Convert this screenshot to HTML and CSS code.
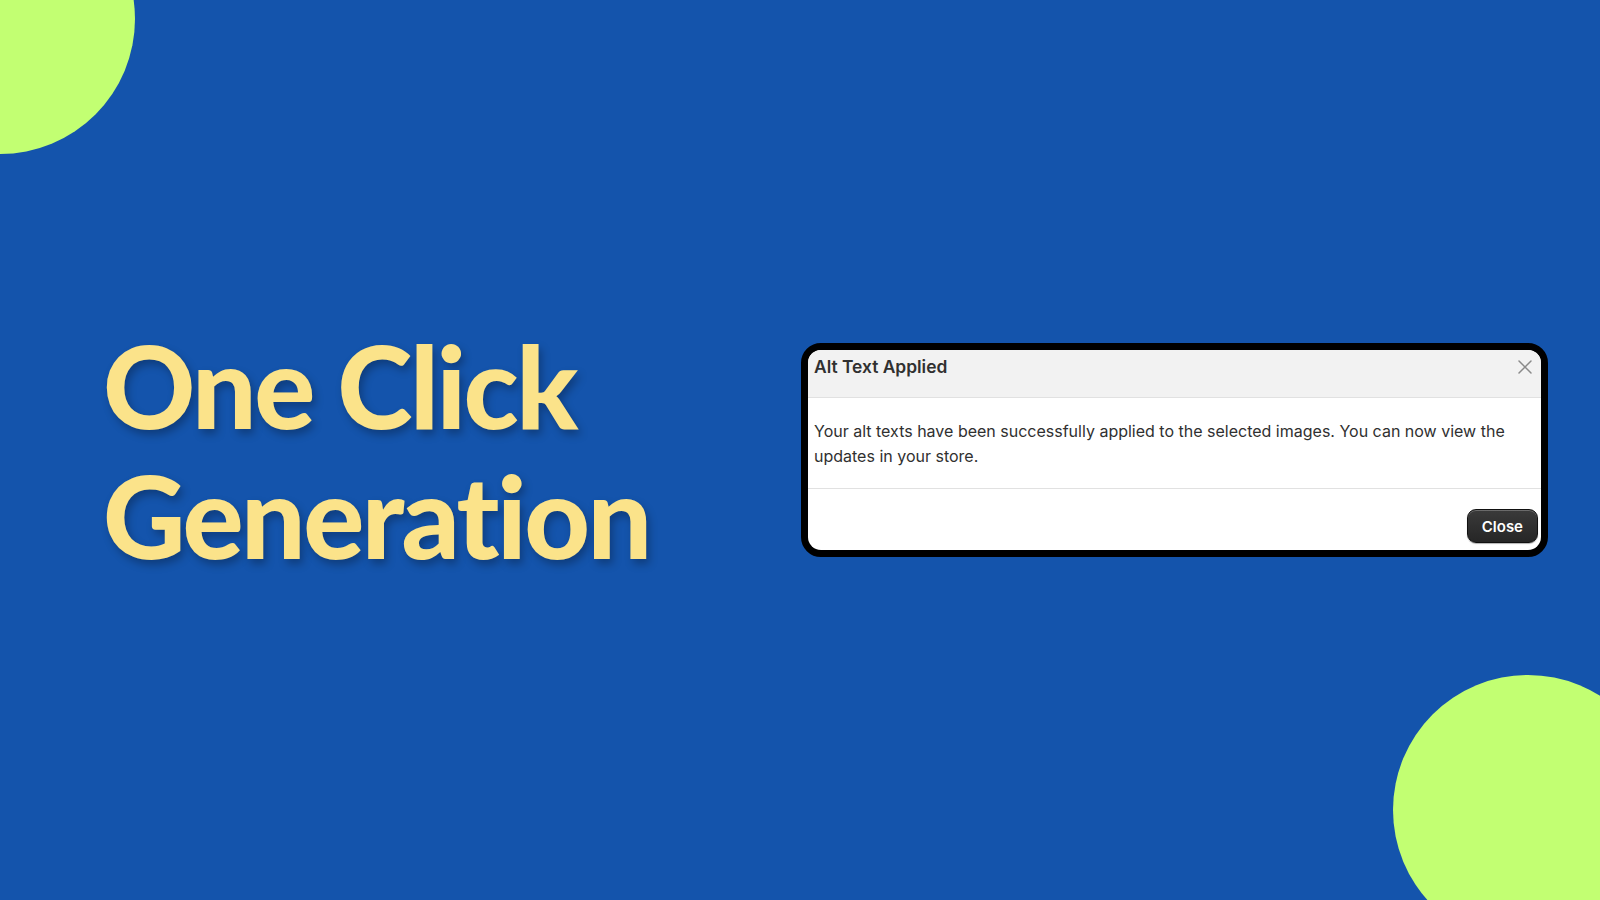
FILE: index.html
```html
<!DOCTYPE html>
<html lang="en">
  <head>
    <meta charset="UTF-8" />
    <meta name="viewport" content="width=device-width, initial-scale=1.0" />
    <title>One Click Generation</title>
    <link rel="stylesheet" href="styles.css">
  </head>
  <body>
    <!-- Decorative corner blobs -->
    <div class="blob blob-top"></div>
    <div class="blob blob-bottom"></div>

    <main class="slide">
      <h1 class="headline">One Click<br>Generation</h1>

      <!-- Modal screenshot -->
      <section class="frame">
        <div class="modal">
          <header class="modal-header">
            <h2 class="modal-title">Alt Text Applied</h2>
            <svg class="modal-x" width="14" height="14" viewBox="0 0 14 14" aria-hidden="true">
              <path d="M1 1 L13 13 M13 1 L1 13" stroke="#8a8a8a" stroke-width="1.5" stroke-linecap="round" fill="none"/>
            </svg>
          </header>
          <div class="modal-body">
            <p>Your alt texts have been successfully applied to the selected images. You can now view the updates in your store.</p>
          </div>
          <footer class="modal-footer">
            <button class="btn-close">Close</button>
          </footer>
        </div>
      </section>
    </main>
  </body>
</html>
```

FILE: styles.css
```css
html,
body {
  margin: 0;
  padding: 0;
}

body {
  width: 1600px;
  height: 900px;
  overflow: hidden;
  position: relative;
  background: #1454ac;
  font-family: "Inter", "Noto Sans", sans-serif;
}

.blob {
  position: absolute;
  width: 270px;
  height: 270px;
  border-radius: 50%;
  background: #c2ff72;
}

.blob-top {
  left: -135px;
  top: -116px;
}

.blob-bottom {
  left: 1393px;
  top: 675px;
}

.slide {
  position: relative;
  height: 900px;
  display: flex;
  align-items: center;
  padding: 0 52px 0 103px;
  box-sizing: border-box;
}

.headline {
  margin: 0;
  font-family: "Lato", "Noto Sans", sans-serif;
  font-weight: 900;
  font-size: 114px;
  line-height: 130px;
  color: #fbe38a;
  text-shadow: 3px 5px 9px rgba(0, 0, 0, 0.28);
  letter-spacing: -2.5px;
}

.frame {
  margin-left: auto;
  width: 733px;
  border: 7px solid #000;
  border-radius: 20px;
  background: #000;
}

.modal {
  background: #fff;
  border-radius: 13px;
  overflow: hidden;
  color: #303030;
}

.modal-header {
  display: flex;
  justify-content: space-between;
  align-items: flex-start;
  height: 48px;
  box-sizing: border-box;
  padding: 6px 9px 0 6px;
  background: #f2f2f2;
  border-bottom: 1px solid #e1e1e1;
}

.modal-title {
  margin: 0;
  font-size: 17.4px;
  line-height: 22px;
  font-weight: 600;
  color: #303030;
}

.modal-x {
  margin-top: 4px;
}

.modal-body {
  padding: 21px 6px 20px;
  border-bottom: 1px solid #e1e1e1;
}

.modal-body p {
  margin: 0;
  font-size: 16px;
  line-height: 24.5px;
}

.modal-footer {
  display: flex;
  justify-content: flex-end;
  padding: 20px 3px 7px;
}

.btn-close {
  height: 34px;
  padding: 0 14px;
  font-family: "Inter", "Noto Sans", sans-serif;
  font-size: 15px;
  font-weight: 600;
  color: #fff;
  background: linear-gradient(#3a3a3a, #262626);
  border: 1px solid #111;
  border-radius: 9px;
  box-shadow: inset 0 1px 0 rgba(255, 255, 255, 0.25), 0 1px 1px rgba(0, 0, 0, 0.3);
  cursor: pointer;
}
```
